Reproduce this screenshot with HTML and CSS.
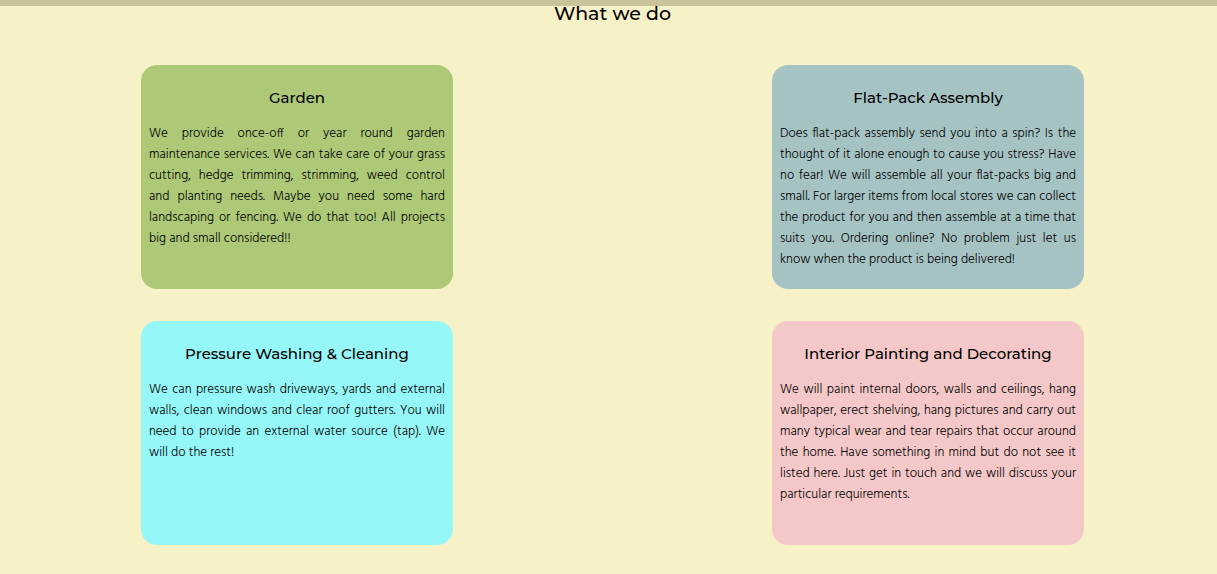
FILE: index.html
```html
<!DOCTYPE html>
<html lang="en">
<head>
<meta charset="utf-8">
<title>What we do</title>
<link rel="stylesheet" href="styles.css">
</head>
<body>
<header class="topbar"></header>
<main class="services">
<h2 class="services-title">What we do</h2>
<div class="grid">
<section class="card garden">
<h3>Garden</h3>
<p>We provide once-off or year round garden maintenance services. We can take care of your grass cutting, hedge trimming, strimming, weed control and&nbsp;planting needs. Maybe you need some hard landscaping or fencing. We do that too! All projects big and small considered!!</p>
</section>
<section class="card flatpack">
<h3>Flat-Pack Assembly</h3>
<p>Does flat-pack assembly send you into a spin? Is the thought of it alone enough to cause you stress? Have no fear! We will assemble all your flat-packs big and small. For larger items from local stores we can collect the product for you and then assemble at a time that suits you. Ordering online? No problem just let us know when the product is being delivered!</p>
</section>
<section class="card washing">
<h3>Pressure Washing &amp; Cleaning</h3>
<p>We can pressure wash driveways, yards and external walls, clean windows and clear roof gutters. You will need to provide an external water source (tap). We will do the rest!</p>
</section>
<section class="card painting">
<h3>Interior Painting and Decorating</h3>
<p>We will paint internal doors, walls and ceilings, hang wallpaper, erect shelving, hang pictures and carry out many typical wear and tear repairs that occur around the home. Have something in mind but do not see it listed here. Just get in touch and we will discuss your particular requirements.</p>
</section>
</div>
</main>
</body>
</html>
```
FILE: styles.css
```css
* {
  box-sizing: border-box;
}

body {
  margin: 0;
  background: #f7f1c8;
  color: #000;
  font-family: "Hind", "Mukta", "Open Sans", sans-serif;
}

.topbar {
  height: 6px;
  background: #cac39a;
}

.services {
  padding: 0 0 29px 8px;
}

.services-title {
  margin: 0 0 43px;
  font: 500 19px/16px Montserrat, Inter, sans-serif;
  text-align: center;
}

.grid {
  display: grid;
  grid-template-columns: repeat(2, 312px);
  grid-auto-rows: minmax(224px, auto);
  row-gap: 32px;
  justify-content: space-between;
  padding: 0 11%;
}

.card {
  padding: 22px 8px 16px;
  border-radius: 16px;
}

.card h3 {
  margin: 0 0 15px;
  font: 500 15px/21px Montserrat, Inter, sans-serif;
  text-align: center;
}

.card p {
  margin: 0;
  font-size: 13px;
  font-weight: 300;
  line-height: 21px;
  text-align: justify;
}

.garden {
  background: #adc977;
}

.flatpack {
  background: #a6c3c3;
}

.washing {
  background: #95f7f7;
}

.painting {
  background: #f4c8c8;
}
```
